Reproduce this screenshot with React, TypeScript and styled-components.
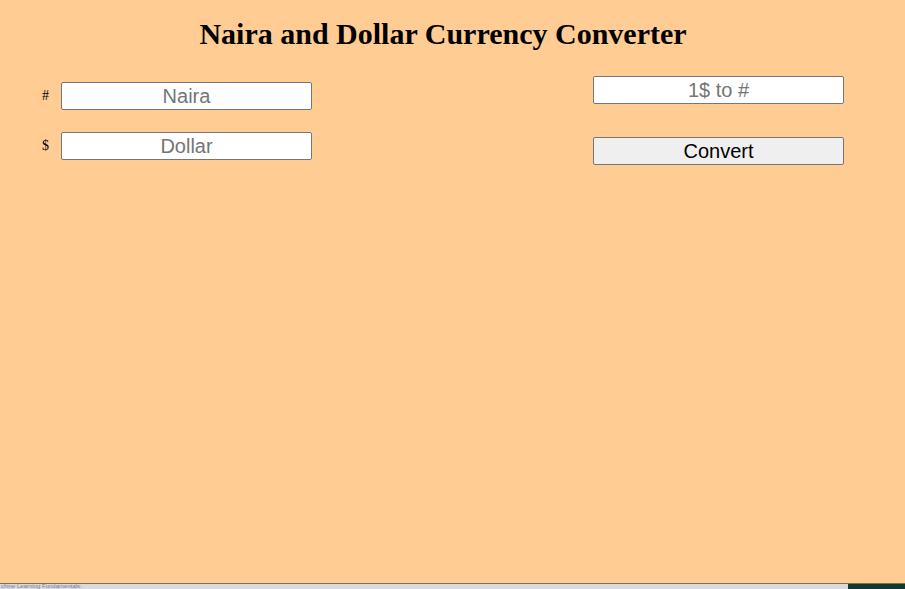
import React from "react";
import styled, { createGlobalStyle } from "styled-components";

const Global = createGlobalStyle`
  html, body { margin: 0; padding: 0; }
  body { background: #ffcc94; font-family: "Liberation Serif", serif; overflow: hidden; }
`;

const Page = styled.div`
  width: 905px;
  height: 589px;
  display: flex;
  flex-direction: column;
`;

const Main = styled.main`
  height: 583px;
  background: #ffcc94;
  display: flex;
  flex-direction: column;
`;

const Title = styled.h1`
  margin: 0;
  padding-top: 15px;
  text-align: center;
  font-family: "Liberation Serif", serif;
  font-size: 30px;
  font-weight: 700;
  line-height: 38px;
  color: #000;
  padding-right: 19px;
`;

const Columns = styled.div`
  display: flex;
  justify-content: space-between;
  padding: 0 61px 0 40px;
`;

const Column = styled.div<{ $top: number; $gap: number }>`
  display: flex;
  flex-direction: column;
  gap: ${(p) => p.$gap}px;
  margin-top: ${(p) => p.$top}px;
`;

const Row = styled.div`
  display: flex;
  align-items: center;
`;

const Label = styled.label`
  width: 21px;
  font-family: "Liberation Serif", serif;
  font-size: 14px;
  color: #000;
  padding-left: 2px;
  box-sizing: border-box;
`;

const Field = styled.input`
  width: 251px;
  height: 28px;
  box-sizing: border-box;
  border: 1px solid #767676;
  border-radius: 2px;
  background: #fff;
  font-family: "Liberation Sans", Arial, sans-serif;
  font-size: 20px;
  text-align: center;
  padding: 0 4px;
  outline: none;
  &::placeholder { color: #757575; }
`;

const Button = styled.button`
  width: 251px;
  height: 28px;
  box-sizing: border-box;
  border: 1px solid #767676;
  border-radius: 2px;
  background: #efefef;
  font-family: "Liberation Sans", Arial, sans-serif;
  font-size: 20px;
  color: #000;
  padding: 0;
`;

const Taskbar = styled.div`
  height: 6px;
  border-top: 1px solid #7d6b55;
  box-sizing: border-box;
  background: #d9d9de;
  display: flex;
  align-items: flex-start;
  overflow: hidden;
`;

const TaskText = styled.span`
  font-family: "Liberation Sans", Arial, sans-serif;
  font-size: 6px;
  line-height: 5px;
  color: #7c8190;
  margin-left: 1px;
  flex: 1;
`;

const GreenBlock = styled.div`
  width: 57px;
  height: 100%;
  background: #0d3b2e;
`;

export default function App() {
  return (
    <Page>
      <Global />
      <Main>
        <Title>Naira and Dollar Currency Converter</Title>
        <Columns>
          <Column $top={29} $gap={22}>
            <Row>
              <Label>#</Label>
              <Field placeholder="Naira" />
            </Row>
            <Row>
              <Label>$</Label>
              <Field placeholder="Dollar" />
            </Row>
          </Column>
          <Column $top={23} $gap={33}>
            <Field placeholder="1$ to #" />
            <Button>Convert</Button>
          </Column>
        </Columns>
      </Main>
      <Taskbar>
        <TaskText>chine Learning Fundamentals:</TaskText>
        <GreenBlock />
      </Taskbar>
    </Page>
  );
}
